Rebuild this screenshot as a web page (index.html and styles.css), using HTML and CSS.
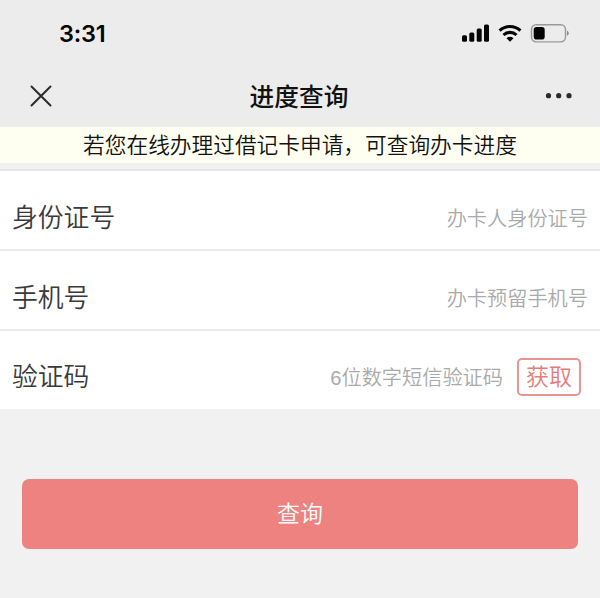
FILE: index.html
```html
<!DOCTYPE html>
<html lang="zh-CN">
<head>
<meta charset="utf-8">
<title>进度查询</title>
<link rel="stylesheet" href="styles.css">
</head>
<body>
<header class="top">
  <div class="status">
    <span class="time">3:31</span>
    <svg class="indicators" width="110" height="24" viewBox="0 0 110 24">
      <g fill="#050505">
        <rect x="2" y="14.200" width="5" height="6.500" rx="1.500"/>
        <rect x="9.300" y="11.500" width="5" height="9.200" rx="1.500"/>
        <rect x="16.700" y="7.500" width="5" height="13.200" rx="1.500"/>
        <rect x="24" y="3.500" width="5" height="17.200" rx="1.500"/>
      </g>
      <g fill="none" stroke="#050505" stroke-width="3.100">
        <path d="M39.600 9.700a15 15 0 0 1 20.800 0"/>
        <path d="M43.500 14a9.300 9.300 0 0 1 13 0"/>
      </g>
      <path d="M46.500 17.200a5 5 0 0 1 7 0L50 20.700z" fill="#050505"/>
      <rect x="71.500" y="3.700" width="34" height="17.200" rx="4.800" fill="none" stroke="#999" stroke-width="1.400"/>
      <rect x="73.700" y="6" width="11" height="12.600" rx="2.800" fill="#050505"/>
      <path d="M107 9.600q3.500 2.700 0 5.400z" fill="#888"/>
    </svg>
  </div>
  <div class="nav">
    <svg class="close" width="22" height="22" viewBox="0 0 22 22"><path d="M1.500 1.500l19 19M20.500 1.500l-19 19"/></svg>
    <h1>进度查询</h1>
    <svg class="more" width="28" height="6" viewBox="0 0 28 6"><circle cx="3.500" cy="2.700" r="2.600"/><circle cx="13.700" cy="2.700" r="2.600"/><circle cx="24" cy="2.700" r="2.600"/></svg>
  </div>
</header>
<p class="notice">若您在线办理过借记卡申请，可查询办卡进度</p>
<main>
  <div class="form">
    <div class="row"><span class="label">身份证号</span><span class="hint">办卡人身份证号</span></div>
    <div class="row"><span class="label">手机号</span><span class="hint">办卡预留手机号</span></div>
    <div class="row code"><span class="label">验证码</span><span class="hint">6位数字短信验证码</span><button class="get">获取</button></div>
  </div>
  <button class="submit">查询</button>
</main>
</body>
</html>
```
FILE: styles.css
```css
* { box-sizing: border-box; }
body { margin: 0; height: 598px; overflow: hidden; background: #f1f1f1; color: #3a3a3a; font-family: "Liberation Sans", "Noto Sans CJK SC", sans-serif; font-weight: 350; }
.top { height: 127px; background: #ececec; color: #111; }
.status { height: 66px; padding: 0 30px 0 59px; display: flex; align-items: center; justify-content: space-between; }
.time { color: #050505; font: 600 23.5px Inter, sans-serif; letter-spacing: -0.2px; }
.nav { height: 60px; padding: 0 27px 0 30px; display: grid; grid-template-columns: 40px 1fr 40px; align-items: center; }
.close { fill: none; stroke: #2b2b2b; stroke-width: 2; stroke-linecap: round; }
.more { justify-self: end; fill: #2b2b2b; }
h1 { margin: 0 5px 0 0; padding-top: 3px; text-align: center; font-size: 24.7px; line-height: 36px; font-weight: 500; }
.notice { margin: 0; height: 36px; line-height: 38px; background: #fffff1; color: #111; text-align: center; font-size: 21.7px; white-space: nowrap; }
.form { margin-top: 6px; border-top: 2px solid #e6e6e6; background: #fff; }
.row { height: 80px; padding: 17px 12px 0; display: flex; align-items: center; border-bottom: 2px solid #eaeaea; }
.row.code { height: 78px; padding-top: 14px; padding-right: 19px; border: 0; }
.label { padding-bottom: 2px; font-size: 25.8px; line-height: 40px; }
.code .label { padding-bottom: 0; }
.hint { margin-left: auto; color: #aaa; font-size: 20.2px; line-height: 30px; }
.code .hint { padding-top: 2px; }
button { font-family: inherit; font-weight: inherit; padding: 0; display: block; }
.get { width: 64px; height: 38px; margin-left: 14px; border: 2px solid #e99492; border-radius: 5px; background: #fff; color: #e57d7b; font-size: 23px; line-height: 33px; }
.submit { width: 556px; height: 70px; margin: 70px auto 0; padding-bottom: 5px; border: 0; border-radius: 7px; background: #ee8280; color: #fff; font-size: 23px; }
```
